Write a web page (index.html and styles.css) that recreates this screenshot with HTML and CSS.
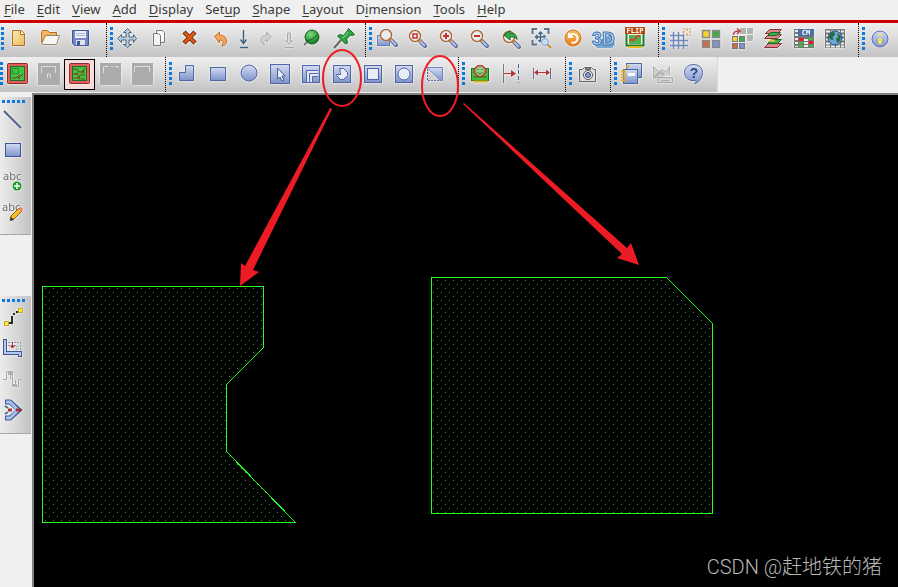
FILE: index.html
```html
<!DOCTYPE html>
<html lang="en">
<head>
  <meta charset="UTF-8" />
  <meta name="viewport" content="width=device-width, initial-scale=1.0"/>
  <title>PCB Editor</title>
  <link rel="stylesheet" href="styles.css">
</head>
<body>
  <!-- Shared gradients and icon parts -->
  <svg class="defs" aria-hidden="true">
    <defs>
      <linearGradient id="blue" x1="0" y1="0" x2="0" y2="1">
        <stop offset="0" stop-color="#d3dcf2"/>
        <stop offset="1" stop-color="#7f93cb"/>
      </linearGradient>
      <linearGradient id="sand" x1="0" y1="0" x2="1" y2="1">
        <stop offset="0" stop-color="#fdeab0"/>
        <stop offset="1" stop-color="#e9b95c"/>
      </linearGradient>
      <linearGradient id="orange" x1="0" y1="0" x2="0" y2="1">
        <stop offset="0" stop-color="#fbc05c"/>
        <stop offset="1" stop-color="#ea7d1c"/>
      </linearGradient>
      <radialGradient id="ball" cx="0.4" cy="0.3" r="0.7">
        <stop offset="0" stop-color="#7fdc7f"/>
        <stop offset="1" stop-color="#0f7a22"/>
      </radialGradient>
      <symbol id="lens" viewBox="0 0 25 25">
        <path d="M14.500 14.500l5.500 5.500" stroke="#5d6c9e" stroke-width="4" stroke-linecap="round"/>
        <path d="M15 15l5 5" stroke="#b5c2e6" stroke-width="2"/>
        <path d="M13.500 13.500l2 2" stroke="#e09a3a" stroke-width="3"/>
        <circle cx="10" cy="10" r="5.500" fill="#e9edf6" stroke="#a8683c" stroke-width="1.500"/>
        <circle cx="10" cy="10" r="4.500" fill="none" stroke="#f4d3a8" stroke-width=".8"/>
      </symbol>
      <symbol id="board" viewBox="0 0 25 25">
        <rect x="2.500" y="1.500" width="20" height="20" rx="1" fill="#e2605c" stroke="#8c2b2b"/>
        <rect x="5.500" y="4.500" width="14" height="14" fill="#3fc443" stroke="#1d6e24"/>
      </symbol>
    </defs>
  </svg>

  <nav class="menu">
    <a href="#"><u>F</u>ile</a>
    <a href="#"><u>E</u>dit</a>
    <a href="#"><u>V</u>iew</a>
    <a href="#"><u>A</u>dd</a>
    <a href="#"><u>D</u>isplay</a>
    <a href="#">Set<u>u</u>p</a>
    <a href="#"><u>S</u>hape</a>
    <a href="#"><u>L</u>ayout</a>
    <a href="#">D<u>i</u>mension</a>
    <a href="#"><u>T</u>ools</a>
    <a href="#"><u>H</u>elp</a>
  </nav>

  <!-- Main toolbar -->
  <div class="bar bar-main">
    <div class="group group-file">
      <button aria-label="New"><svg viewBox="0 0 25 25"><path d="M6.500 4.500h9l3 3v12h-12z" fill="url(#sand)" stroke="#a9702b"/><path d="M14.500 4.500v4h4" fill="#fff3cc" stroke="#a9702b"/></svg></button>
      <button aria-label="Open"><svg viewBox="0 0 25 25"><path d="M4.500 17V5.500l1-1h5l2 2h7V10" fill="#f2b765" stroke="#b06c25"/><path d="M4.500 18l4-8.500h14l-3 9h-14z" fill="#f7f7f7" stroke="#9a8468"/><path d="M4.500 17l4-8h3" fill="none" stroke="#e08a2e"/></svg></button>
      <button aria-label="Save"><svg viewBox="0 0 25 25"><path d="M4.500 4.500h16v15h-14l-2-2z" fill="#7487c4" stroke="#40569c"/><rect x="7" y="5" width="11" height="7" fill="#eef1fa"/><path d="M8 7.500h9M8 9.500h9" stroke="#aab4d6"/><rect x="8" y="14" width="9" height="5" fill="#dfe4f1"/><rect x="9" y="15" width="3" height="4" fill="#40569c"/></svg></button>
    </div>
    <div class="group group-edit">
      <button aria-label="Move"><svg viewBox="0 0 25 25"><path d="M12.500 2.500l4 4h-2.500v4.500h4.500V8.500l3 4-3 4V14H14v4.500h2.500l-4 3-4-3H11V14H6.500v2.500l-4-4 4-4V11H11V6.500H8.500z" fill="#b9cde0" stroke="#48657f"/></svg></button>
      <button aria-label="Copy"><svg viewBox="0 0 25 25"><path d="M10.500 4.500h6l2 2v10h-8z" fill="#fafafa" stroke="#777"/><path d="M7.500 7.500h5l2 2v10h-7z" fill="#f4f4f4" stroke="#777"/></svg></button>
      <button aria-label="Delete"><svg viewBox="0 0 25 25"><path d="M7 6l11 11M18 6L7 17" stroke="#6d2407" stroke-width="4.500"/><path d="M7.500 6.500l10 10M17.500 6.500l-10 10" stroke="#dd5a14" stroke-width="2.500"/></svg></button>
      <button aria-label="Undo"><svg viewBox="0 0 25 25"><path d="M6.500 10.500l5-4.500v3c5 0 7 3 7 6s-2 5-5 5c2-2 2.500-6-2-6v3z" fill="#f4a45c" stroke="#c0702a"/></svg></button>
      <button class="drop" aria-label="Undo list"><svg viewBox="0 0 15 25"><path d="M7.500 4v13M4.500 13.500l3 4 3-4M4 21.500h8" fill="none" stroke="#396281" stroke-width="1.500"/></svg></button>
      <button aria-label="Redo" disabled><svg viewBox="0 0 25 25"><path d="M17.500 10.500l-5-4.500v3c-5 0-6 3-6 5s2 5 4 5c-1-2-1-5 2-5v2z" fill="#d0d0d0" stroke="#a7a7a7"/></svg></button>
      <button class="drop" aria-label="Redo list" disabled><svg viewBox="0 0 15 25"><path d="M5.500 7v8h-2l3.500 3 3.500-3h-2V7zM3 21.500h9" fill="#d8d8d8" stroke="#a7a7a7"/></svg></button>
      <button aria-label="Fix"><svg viewBox="0 0 25 25"><path d="M4 19l6-6" stroke="#777" stroke-width="2"/><circle cx="12" cy="11" r="7" fill="url(#ball)" stroke="#125c20"/><path d="M6 14c4 1 8-1 11-5" fill="none" stroke="#0c5a19"/></svg></button>
      <button aria-label="Unfix"><svg viewBox="0 0 25 25"><path d="M3 22l7-8" stroke="#666" stroke-width="2"/><path d="M17.500 2.500l6 6-2 1-2-.5-4 4 1 4-2 1-8-8 2-1.500 4 1 4-5z" fill="#2fa741" stroke="#125c20"/><path d="M17 6l-5 6" stroke="#8be09a"/></svg></button>
    </div>
    <div class="group">
      <button aria-label="Zoom points"><svg viewBox="0 0 25 25"><rect x="3.500" y="9.500" width="12" height="10" fill="url(#blue)" stroke="#6a7db5"/><use href="#lens" x="2" y="-1" width="25" height="25"/></svg></button>
      <button aria-label="Zoom fit"><svg viewBox="0 0 25 25"><use href="#lens" width="25" height="25"/><rect x="8" y="8" width="4" height="4" fill="none" stroke="#c22f35" stroke-width="1.500"/></svg></button>
      <button aria-label="Zoom in"><svg viewBox="0 0 25 25"><use href="#lens" width="25" height="25"/><path d="M7 10h6M10 7v6" stroke="#c22f35" stroke-width="2"/></svg></button>
      <button aria-label="Zoom out"><svg viewBox="0 0 25 25"><use href="#lens" width="25" height="25"/><path d="M7 10h6" stroke="#c22f35" stroke-width="2"/></svg></button>
      <button aria-label="Zoom previous"><svg viewBox="0 0 25 25"><use href="#lens" x="1" y="1" width="25" height="25"/><path d="M6 9l6-4.500v3c5-1 7 2 7 6-2-2.500-4-3-7-2.500v3z" fill="#35a847" stroke="#17692a"/></svg></button>
      <button aria-label="Zoom selection"><svg viewBox="0 0 25 25"><path d="M3.500 8V3H8M15 3h4.500V8M3.500 14v4.500H8" fill="none" stroke="#5d7490" stroke-width="2"/><path d="M11.500 6v10M6.500 11h10M9.500 8l2-2 2 2M8.500 9l-2 2 2 2M14.500 9l2 2M9.500 14l2 2" fill="none" stroke="#48678a" stroke-width="1.500"/><path d="M18 18l4 4" stroke="#c98734" stroke-width="2"/><circle cx="16" cy="16" r="3.500" fill="#c5def5" stroke="#7aa0c8"/></svg></button>
      <button aria-label="Redraw"><svg viewBox="0 0 25 25"><circle cx="13" cy="12" r="8" fill="url(#orange)" stroke="#c9751f"/><path d="M9 7v4h4M9.500 10.500c2-4 8-3 8 2 0 3-3 5-6 4" fill="none" stroke="#fff" stroke-width="2"/></svg></button>
      <button aria-label="3D view"><svg viewBox="0 0 25 25"><path d="M3 18l3 4h15l3-3-3-12z" fill="#7ba5d0"/><text class="glyph-3d" x="1" y="19">3D</text></svg></button>
      <button aria-label="Flip board"><svg viewBox="0 0 25 25"><rect x="4.500" y="6.500" width="17" height="13" fill="#f4f4e4" stroke="#1e7d2c" stroke-width="2"/><rect x="7" y="9" width="12" height="9" fill="#4cb552"/><path d="M8 15c1-4 3 2 5-2s3-3 5-3" fill="none" stroke="#d0453a" stroke-width="2"/><path d="M6 21h14" stroke="#e3b91c" stroke-width="2"/><rect x="3" y="1" width="20" height="7" fill="#b04a10"/><text class="glyph-flip" x="13" y="7">FLIP</text></svg></button>
    </div>
    <div class="group">
      <button aria-label="Grid"><svg viewBox="0 0 25 25"><path d="M6.500 6v17M11.500 6v17M16.500 8v15M3 9.500h14M3 14.500h18M3 19.500h18" stroke="#6f86b8" stroke-width="1.500"/><path d="M20 2v3M20 7v3M15 6h3M22 6h2M16 2l2 2M24 2l-2 2M22 8l2 2" stroke="#d48a36"/></svg></button>
      <button aria-label="Colors"><svg viewBox="0 0 25 25"><g stroke="#888" stroke-width="1.500"><rect x="4.500" y="4.500" width="7" height="7" fill="#fbd22b"/><rect x="14.500" y="4.500" width="7" height="7" fill="#3fae45"/><rect x="4.500" y="14.500" width="7" height="7" fill="#cf6b4e"/><rect x="14.500" y="14.500" width="7" height="7" fill="#7f93cb"/></g></svg></button>
      <button aria-label="Swap colors"><svg viewBox="0 0 25 25"><path d="M11 2h6v6h-6zM18 2h6v6h-6zM18 9h6v6h-6z" fill="#b4b4b4"/><path d="M4.500 9c0-3 2-4 5-4M8 2.500l3 2.500-3 3" fill="none" stroke="#b74049" stroke-width="1.500"/><g stroke="#777"><rect x="3.500" y="10.500" width="5" height="5" fill="#fbd22b"/><rect x="10.500" y="10.500" width="5" height="5" fill="#3fae45"/><rect x="3.500" y="17.500" width="5" height="5" fill="#cf6b4e"/><rect x="10.500" y="17.500" width="5" height="5" fill="#7f93cb"/></g></svg></button>
      <button aria-label="Cross section"><svg viewBox="0 0 25 25"><path d="M9.500 3.500h12l-4 4h-12z" fill="#d98989" stroke="#8c2f36"/><path d="M4.500 12.500l4-4h13l-4 4z" fill="#d98989" stroke="#8c2f36"/><path d="M4.500 21.500l4-4h13l-4 4z" fill="#d98989" stroke="#8c2f36"/><path d="M7.500 9.500l3-3h10l-4 3zM7.500 17.500l4-4h10l-4 4z" fill="#42a94c" stroke="#1c672a"/><path d="M9 14.500h6" stroke="#f1c93a" stroke-width="2"/></svg></button>
      <button aria-label="Constraint manager"><svg viewBox="0 0 25 25"><rect x="3" y="3" width="20" height="19" fill="#777"/><path d="M4 4h3v2H4zM4 8h3v2H4zM4 12h3v2H4zM4 16h3v2H4zM4 20h3v1H4zM13 13h4v2h-4zM13 16h4v2h-4zM13 19h4v2h-4z" fill="#eee"/><path d="M8 16h4v2H8zM8 19h4v2H8zM18 12h4v2h-4zM18 19h4v2h-4z" fill="#35c043"/><path d="M8 12h4v3H8zM18 15h4v3h-4z" fill="#f01818"/><rect x="7" y="3" width="16" height="7" fill="#4c6fa3"/><text class="glyph-cm" x="15" y="9">CM</text></svg></button>
      <button aria-label="Spreadsheet"><svg viewBox="0 0 25 25"><rect x="3" y="3" width="20" height="19" fill="#777"/><path d="M4 5.500h18M4 9.500h18M4 13.500h18M4 17.500h18M4 20.500h18" stroke="#eee" stroke-width="2" stroke-dasharray="4 1"/><circle cx="13" cy="12" r="7" fill="#6fa4d8" stroke="#264c76"/><path d="M8 8c2-3 5-2 5 0s-3 2-2 4-1 3-3 1-1-3 0-5zM15 7l4 3-1 5-3 2-1-4 2-2z" fill="#256e3f"/></svg></button>
    </div>
    <div class="group group-last">
      <button aria-label="Info"><svg viewBox="0 0 25 25"><circle cx="13" cy="13" r="8" fill="url(#blue)" stroke="#5b6fa9"/><path d="M13 8v2M13 12v6" stroke="#ffe93b" stroke-width="3"/></svg></button>
    </div>
  </div>

  <!-- Shape toolbar -->
  <div class="bar bar-shape">
    <div class="group group-mode">
      <button aria-label="General edit"><svg viewBox="0 0 25 25"><use href="#board" width="25" height="25"/><rect x="7.500" y="6.500" width="6" height="5" fill="none" stroke="#125c20" stroke-dasharray="1 1"/><path d="M7 16h4l2-2h3l2-2" fill="none" stroke="#8c2b2b"/><circle cx="14" cy="16" r="1" fill="#8c2b2b"/></svg></button>
      <button aria-label="Placement edit" disabled><svg viewBox="0 0 25 25"><rect x="2" y="1" width="22" height="22" fill="#ababab"/><path d="M5.500 11V4.500h14V11M11.500 16v-4h3v4" fill="none" stroke="#ddd"/></svg></button>
      <button class="active" aria-label="Etch edit"><svg viewBox="0 0 25 25"><use href="#board" width="25" height="25"/><path d="M6 7h4l2 3h3l3-4M6 12h3M6 16h4l3-3h5M14 17h4" fill="none" stroke="#7b3a1e"/><g fill="none" stroke="#7b3a1e"><circle cx="10" cy="12" r="1"/><circle cx="16" cy="10" r="1"/><circle cx="12" cy="16" r="1"/></g></svg></button>
      <button aria-label="Signal edit" disabled><svg viewBox="0 0 25 25"><rect x="2" y="1" width="21" height="22" fill="#ababab"/><path d="M5.500 11V4.500h5M13 4.500h2M17 4.500h3V6" fill="none" stroke="#ddd"/></svg></button>
      <button aria-label="Layout edit" disabled><svg viewBox="0 0 25 25"><rect x="3" y="1" width="21" height="22" fill="#ababab"/><path d="M5.500 10V4.500h15V10" fill="none" stroke="#ddd"/></svg></button>
    </div>
    <div class="group">
      <button aria-label="Polygon"><svg viewBox="0 0 25 25"><path d="M5.500 18.500v-8h6v-7h8v15z" fill="url(#blue)" stroke="#5067a5"/></svg></button>
      <button aria-label="Rectangle"><svg viewBox="0 0 25 25"><rect x="5.500" y="5.500" width="15" height="13" fill="url(#blue)" stroke="#5067a5"/></svg></button>
      <button aria-label="Circle"><svg viewBox="0 0 25 25"><circle cx="13" cy="11" r="8" fill="url(#blue)" stroke="#5067a5"/></svg></button>
      <button aria-label="Select shape"><svg viewBox="0 0 25 25"><rect x="3.500" y="2.500" width="19" height="19" fill="url(#blue)" stroke="#5067a5"/><path d="M10.500 6v11l2.500-2 2 4 2-1-2-4h3z" fill="#e7ecf7" stroke="#4a5f99"/></svg></button>
      <button aria-label="Void element"><svg viewBox="0 0 25 25"><rect x="4.500" y="3.500" width="17" height="17" fill="url(#blue)" stroke="#5067a5"/><path d="M9 20V9h11v5h-5v6z" fill="#e3e8f4"/><path d="M8.500 20V8.500H20M11.500 20v-8.500H20M14.500 20v-5.500H20" fill="none" stroke="#5067a5"/></svg></button>
      <button aria-label="Void polygon"><svg viewBox="0 0 25 25"><rect x="4.500" y="3.500" width="17" height="17" fill="url(#blue)" stroke="#5067a5"/><path d="M10.500 6.500h4l4 4v3l-4 4h-3l-4-4v-1h4v-2z" fill="#e9edf7" stroke="#5067a5"/></svg></button>
      <button aria-label="Void rectangle"><svg viewBox="0 0 25 25"><rect x="4.500" y="3.500" width="17" height="17" fill="url(#blue)" stroke="#5067a5"/><rect x="7.500" y="6.500" width="11" height="11" fill="#e9edf7" stroke="#5067a5"/></svg></button>
      <button aria-label="Void circle"><svg viewBox="0 0 25 25"><rect x="4.500" y="3.500" width="17" height="17" fill="url(#blue)" stroke="#5067a5"/><circle cx="13" cy="12" r="6" fill="#e9edf7" stroke="#5067a5"/></svg></button>
      <button aria-label="Chamfer"><svg viewBox="0 0 25 25"><path d="M5 5.500h15.500v13H18z" fill="url(#blue)" stroke="#6f83bb"/><path d="M5.500 7v11.500H18" fill="none" stroke="#5067a5" stroke-dasharray="2 1"/><path d="M6 8v10h10z" fill="#d5d2cc"/></svg></button>
    </div>
    <div class="group">
      <button aria-label="Design check"><svg viewBox="0 0 25 25"><rect x="4.500" y="6.500" width="17" height="12" fill="#48bd3c" stroke="#1d6e24"/><path d="M6 10h3M17 10h3M6 15h14" stroke="#1d6e24"/><path d="M6 19.500h15" stroke="#e3b91c" stroke-width="2"/><circle cx="13" cy="9" r="5.500" fill="#8ed07f" stroke="#c33a3a" stroke-width="1.500"/><path d="M10 10c1 2 5 2 6 0M10.500 7.500h1M14.500 7.500h1" fill="none" stroke="#2c7b30"/></svg></button>
      <button aria-label="Spacing"><svg viewBox="0 0 25 25"><path d="M5.500 2v19" stroke="#777"/><path d="M20.500 2v19" stroke="#4a6298" stroke-dasharray="4 2"/><path d="M6 11.500h8" stroke="#b43434"/><path d="M13 8l5 3.500-5 3.500z" fill="#b43434"/></svg></button>
      <button aria-label="Dimension"><svg viewBox="0 0 25 25"><path d="M4.500 6v11M21.500 6v11" stroke="#5d6f9c"/><path d="M8 10.500h10" stroke="#b43434"/><path d="M9 7.500l-4 3 4 3zM17 7.500l4 3-4 3z" fill="#b43434"/></svg></button>
    </div>
    <div class="group">
      <button aria-label="Snapshot"><svg viewBox="0 0 25 25"><path d="M5.500 7.500h3l2-2h7l2 2h2v12h-16z" fill="#dedede" stroke="#666"/><rect x="11" y="6" width="6" height="2" fill="#777"/><circle cx="14" cy="13" r="4.500" fill="#f4f4f4" stroke="#555"/><circle cx="14" cy="13" r="2.500" fill="#86a0d2" stroke="#36486c"/></svg></button>
    </div>
    <div class="group group-end">
      <button aria-label="Reports"><svg viewBox="0 0 25 25"><rect x="7.500" y="1.500" width="15" height="14" fill="url(#blue)" stroke="#5067a5"/><rect x="4.500" y="7.500" width="14" height="14" fill="url(#blue)" stroke="#5067a5"/><rect x="9" y="11" width="7" height="3" fill="#fff"/><path d="M7 4.500h3M2 9.500h5M2 12.500h5M2 15.500h5M2 18.500h5" stroke="#e0ab1e" stroke-width="2"/></svg></button>
      <button aria-label="Review" disabled><svg viewBox="0 0 25 25"><path d="M3.500 16.500v-12l5 5 4-2 4 2 3-5v9" fill="#cfcfcf" stroke="#b0b0b0"/><path d="M4 16l6-6 4 3" fill="none" stroke="#b0b0b0" stroke-width="2"/><path d="M7.500 15.500h15v5h-15zM11 18.500h8" fill="#d4d4d4" stroke="#aaa"/></svg></button>
      <button aria-label="Help"><svg viewBox="0 0 25 25"><path d="M12.500 2.500c6 0 9 4 9 8 0 6-4 10-8 11 2-1 2-2 1-3-7 1-11-3-11-8s4-8 9-8z" fill="url(#blue)" stroke="#5067a5"/><text class="glyph-help" x="13" y="16">?</text></svg></button>
    </div>
  </div>

  <div class="workspace">
    <div class="side">
      <div class="side-group">
        <button aria-label="Add line"><svg viewBox="0 0 25 25"><path d="M3 5l17 17" stroke="#4e5f8c" stroke-width="2"/></svg></button>
        <button aria-label="Add rectangle"><svg viewBox="0 0 25 25"><rect x="4.500" y="6.500" width="15" height="13" fill="url(#blue)" stroke="#3f5494"/></svg></button>
        <button aria-label="Add text"><svg viewBox="0 0 25 25"><text class="glyph-abc" x="2" y="12">abc</text><circle cx="16" cy="18" r="4.500" fill="#219a2b"/><path d="M13 18h6M16 15v6" stroke="#fff" stroke-width="1.500"/></svg></button>
        <button aria-label="Edit text"><svg viewBox="0 0 25 25"><text class="glyph-abc" x="1" y="12">abc</text><path d="M9 21l1-4 8-8 3 3-8 8z" fill="#f6bd2c" stroke="#8d5a1c"/><path d="M17 9l3-1 2 2-1 3z" fill="#e67a6d"/><path d="M9 22l1-4 3 3z" fill="#333"/></svg></button>
      </div>
      <div class="side-group">
        <button aria-label="Add connect"><svg viewBox="0 0 25 25"><path d="M5 18h6v-7M12 9h2M15 7h3" fill="none" stroke="#2b2b2b" stroke-width="2"/><rect x="3.500" y="16.500" width="4" height="4" fill="#ffec3d" stroke="#c2a82c"/><rect x="17.500" y="3.500" width="4" height="4" fill="#ffec3d" stroke="#c2a82c"/></svg></button>
        <button aria-label="Slide"><svg viewBox="0 0 25 25"><path d="M4 3v14h15v4" fill="none" stroke="#3f5494" stroke-width="4"/><path d="M4 4v13h15v3" fill="none" stroke="#b5c8ee" stroke-width="2"/><path d="M7 6.500h12.500V14M7 9.500h9V14" fill="none" stroke="#8596bd" stroke-dasharray="2 1"/><path d="M11.500 6v5M9.500 10h4l-2 2z" fill="#c12f35" stroke="#c12f35"/></svg></button>
        <button aria-label="Delay tune" disabled><svg viewBox="0 0 25 25"><path d="M2 12.500h3.500v-8h6v15h6v-7H21M9.500 6v6M14.500 19v-6" fill="none" stroke="#a8a8a8"/><path d="M7 5h4v3H7zM12 17h4v3h-4z" fill="#b0b0b0"/></svg></button>
        <button aria-label="Spread"><svg viewBox="0 0 25 25"><path d="M4 4h5l9 8-9 8H4" fill="none" stroke="#3f5494" stroke-width="5"/><path d="M5 4h4l8 8-8 8H5" fill="none" stroke="#a7c2ee" stroke-width="3"/><path d="M4 8l3 2M4 16l3-2" stroke="#4e6390" stroke-width="2"/><path d="M7 12h4M15 12h5" stroke="#a8303b" stroke-width="3"/></svg></button>
      </div>
    </div>

    <main class="canvas">
      <svg class="design" role="img" aria-label="Board shapes">
        <defs>
          <pattern id="dots" width="8" height="8" patternUnits="userSpaceOnUse">
            <rect x="3" y="1" width="1" height="1"/>
            <rect x="7" y="5" width="1" height="1"/>
          </pattern>
        </defs>
        <path class="shape" d="M8.500 191.500h221v61l-37 37v67l69 71h-253z"/>
        <path class="shape" d="M397.500 182.500h235l46 46v190h-281z"/>
      </svg>
      <p class="watermark">CSDN @赶地铁的猪</p>
    </main>
  </div>

  <!-- Red callouts drawn over the editor -->
  <svg class="callouts" aria-hidden="true">
    <ellipse cx="342" cy="78" rx="19" ry="28"/>
    <ellipse cx="440" cy="86" rx="18" ry="30"/>
    <path d="M330 108l2 1-79 161 6 2-19 14 1-23 4 3z"/>
    <path d="M463 104l1-1 163 145 4-5 8 22-22-7 5-4z"/>
  </svg>
</body>
</html>
```

FILE: styles.css
```css
* {
  box-sizing: border-box;
}

body {
  margin: 0;
  min-height: 100vh;
  display: flex;
  flex-direction: column;
  position: relative;
  overflow: hidden;
  background: #f0f0f0;
  font-family: "Noto Sans", "Open Sans", sans-serif;
  font-size: 13px;
  color: #3a3a3a;
}

.defs {
  position: absolute;
  width: 0;
  height: 0;
}

/* menu */
.menu {
  display: flex;
  gap: 12px;
  height: 23px;
  padding-left: 4px;
  border-bottom: 3px solid #cc0000;
}

.menu a {
  color: inherit;
  line-height: 19px;
  text-decoration: none;
}

.menu u {
  text-underline-offset: 2px;
}

/* toolbars */
.bar {
  display: flex;
}

.group {
  display: flex;
  position: relative;
  padding: 0 8px 3px 5px;
  background: linear-gradient(#efefef, #c3c3c3);
  border-right: 1px dotted #000;
}

.group::before {
  content: "";
  position: absolute;
  left: 3px;
  top: 4px;
  width: 3px;
  height: 23px;
  background: repeating-linear-gradient(#0a7bdc 0 3px, transparent 3px 5px);
}

.bar-shape .group {
  padding-top: 2px;
  padding-bottom: 2px;
}

.bar-shape .group::before {
  top: 5px;
}

.group-file {
  margin-left: -2px;
  padding-right: 10px;
}

.group-edit {
  padding-right: 6px;
}

.group-mode {
  margin-left: -3px;
}

.group-last {
  flex: 1;
  border-right: none;
}

.group-end {
  border-right: 1px solid #d8d8d8;
}

button {
  width: 31px;
  height: 31px;
  padding: 0;
  border: none;
  background: none;
  display: flex;
  align-items: center;
  justify-content: center;
  flex-shrink: 0;
}

button svg {
  width: 25px;
  height: 25px;
  fill: none;
  filter: drop-shadow(0 0 1px #ffffff);
}

.drop,
.drop svg {
  width: 15px;
}

.active {
  background: #f8dada;
  border: 1px solid #000;
}

/* letters inside icons */
.glyph-3d {
  font: bold 18px "Liberation Sans", sans-serif;
  fill: #b4d2f0;
  stroke: #3f74ae;
}

.glyph-flip,
.glyph-cm {
  font: bold 7px "DejaVu Sans Mono", monospace;
  fill: #fff;
  text-anchor: middle;
}

.glyph-help {
  font: bold 14px "Liberation Sans", sans-serif;
  fill: #2f4380;
  text-anchor: middle;
}

.glyph-abc {
  font: 11px "Noto Sans", sans-serif;
  fill: #6d6d6d;
}

/* work area */
.workspace {
  flex: 1;
  display: flex;
  padding-top: 1px;
}

.side {
  width: 32px;
  padding-top: 4px;
}

.side-group {
  position: relative;
  width: 31px;
  margin-bottom: 61px;
  padding: 6px 0 7px;
  background: linear-gradient(to right, #ececec, #c3c3c3);
  border-bottom: 1px solid #a8a8a8;
}

.side-group::before {
  content: "";
  position: absolute;
  left: 2px;
  top: 3px;
  width: 23px;
  height: 3px;
  background: repeating-linear-gradient(to right, #0a7bdc 0 3px, transparent 3px 5px);
}

.side button {
  width: 27px;
}

.canvas {
  flex: 1;
  display: flex;
  position: relative;
  background: #000;
  border-top: 2px solid #808080;
  border-left: 2px solid #808080;
}

.design {
  flex: 1;
  min-width: 0;
}

#dots rect {
  fill: #2a932a;
  shape-rendering: crispEdges;
}

.shape {
  fill: url(#dots);
  stroke: #22ff22;
  shape-rendering: crispEdges;
}

.watermark {
  position: absolute;
  right: 16px;
  bottom: 5px;
  margin: 0;
  color: #b8b8b8;
  font-family: Roboto, "Noto Sans CJK SC", sans-serif;
  font-size: 20px;
  font-weight: 300;
  line-height: 30px;
}

/* callouts */
.callouts {
  position: absolute;
  left: 0;
  top: 0;
  width: 100%;
  height: 100%;
  pointer-events: none;
}

.callouts ellipse {
  fill: none;
  stroke: #ed1c24;
  stroke-width: 2;
}

.callouts path {
  fill: #ed1c24;
}
```
